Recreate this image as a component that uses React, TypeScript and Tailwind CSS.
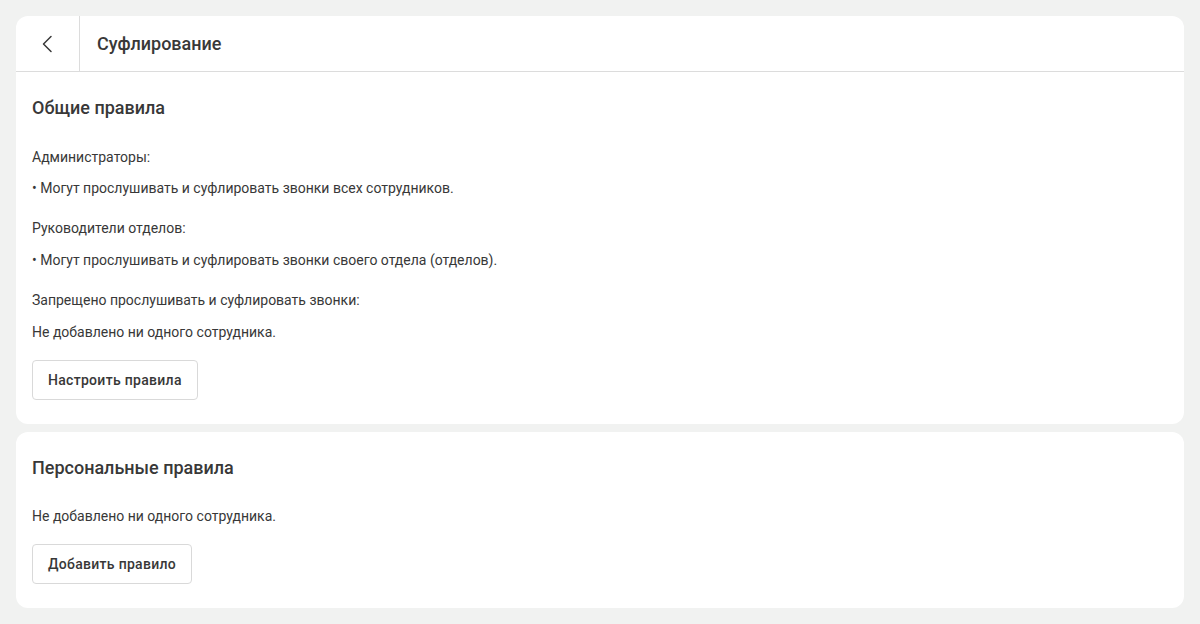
import { ReactNode } from "react"

function Button({ children }: { children: ReactNode }) {
    return (
        <button className="h-10 rounded border border-[#d9d9d9] bg-white px-[15px] text-sm font-medium tracking-[0.3px] text-[#383838]">
            {children}
        </button>
    )
}

function Line({ children, className = "" }: { children: ReactNode; className?: string }) {
    return <p className={`text-sm leading-5 text-[#383838] ${className}`}>{children}</p>
}

export default function App() {
    return (
        <div className="flex min-h-[624px] flex-col gap-2 bg-[#f1f2f1] p-4 font-['Roboto',sans-serif]">
            <section className="rounded-xl bg-white">
                <header className="flex h-14 items-stretch border-b border-[#dcdcdc]">
                    <button className="flex w-16 items-center justify-center border-r border-[#dcdcdc] text-[#383838]">
                        <svg width="16" height="18" viewBox="0 0 16 18" fill="none">
                            <path d="M11 1.5 3.5 9 11 16.5" stroke="currentColor" strokeWidth="1.5" strokeLinecap="round" strokeLinejoin="round" />
                        </svg>
                    </button>
                    <h1 className="flex items-center pl-[17px] text-lg font-medium text-[#383838]">Суфлирование</h1>
                </header>
                <div className="px-4 pb-6 pt-6">
                    <h2 className="text-lg font-medium leading-6 text-[#383838]">Общие правила</h2>
                    <Line className="mt-[27px]">Администраторы:</Line>
                    <Line className="mt-[11px]">• Могут прослушивать и суфлировать звонки всех сотрудников.</Line>
                    <Line className="mt-5">Руководители отделов:</Line>
                    <Line className="mt-3">• Могут прослушивать и суфлировать звонки своего отдела (отделов).</Line>
                    <Line className="mt-5">Запрещено прослушивать и суфлировать звонки:</Line>
                    <Line className="mt-3">Не добавлено ни одного сотрудника.</Line>
                    <div className="mt-[18px]">
                        <Button>Настроить правила</Button>
                    </div>
                </div>
            </section>
            <section className="rounded-xl bg-white px-4 pb-6 pt-6">
                <h2 className="text-lg font-medium leading-6 text-[#383838]">Персональные правила</h2>
                <Line className="mt-[26px]">Не добавлено ни одного сотрудника.</Line>
                <div className="mt-[18px]">
                    <Button>Добавить правило</Button>
                </div>
            </section>
        </div>
    )
}
